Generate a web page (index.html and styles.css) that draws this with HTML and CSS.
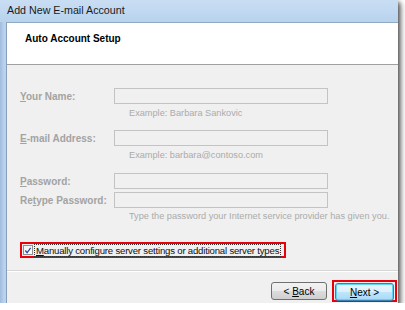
FILE: index.html
```html
<!DOCTYPE html>
<html lang="en">
<head>
  <meta charset="UTF-8" />
  <title>Add New E-mail Account</title>
  <link rel="stylesheet" href="styles.css">
</head>
<body>
  <div class="window">
    <div class="titlebar">Add New E-mail Account</div>
    <div class="client">
      <header class="wizard-head">
        <h1>Auto Account Setup</h1>
      </header>

      <!-- Account fields (disabled) -->
      <section class="fields">
        <div class="row row-name">
          <label><u>Y</u>our Name:</label>
          <div class="box"></div>
        </div>
        <div class="example">Example: Barbara Sankovic</div>

        <div class="row row-mail">
          <label><u>E</u>-mail Address:</label>
          <div class="box"></div>
        </div>
        <div class="example">Example: barbara@contoso.com</div>

        <div class="row row-pass">
          <label><u>P</u>assword:</label>
          <div class="box"></div>
        </div>
        <div class="row row-retype">
          <label>Re<u>t</u>ype Password:</label>
          <div class="box"></div>
        </div>
        <div class="example hint">Type the password your Internet service provider has given you.</div>
      </section>

      <div class="manual">
        <span class="check">
          <svg width="9" height="9" viewBox="0 0 9 9"><path d="M1.5 4.5 L3.5 7 L7.5 1.5" fill="none" stroke="#2b4a9a" stroke-width="1.4"/></svg>
        </span>
        <span class="manual-text"><u>M</u>anually configure server settings or additional server types</span>
      </div>

      <footer class="buttons">
        <button class="btn"><span>&lt; <u>B</u>ack</span></button>
        <div class="next-mark">
          <button class="btn btn-default"><span><u>N</u>ext &gt;</span></button>
        </div>
      </footer>
    </div>
  </div>
</body>
</html>
```

FILE: styles.css
```css
* { box-sizing: border-box; }
body {
  margin: 0;
  background: #fff;
  font-family: 'Liberation Sans', Arial, sans-serif;
  font-size: 10px;
  color: #000;
}
.window {
  width: 398px;
  height: 303px;
  display: flex;
  flex-direction: column;
  background: linear-gradient(to right, #9fbcdc, #b9d3ee 4px, #c3dbf3);
  box-shadow: 2px 2px 4px rgba(0,0,0,0.55), 4px 4px 6px rgba(0,0,0,0.25);
}
.titlebar {
  height: 22px;
  padding-left: 7px;
  line-height: 20px;
  font-size: 10.7px;
  color: #1a1a1a;
  background: linear-gradient(to bottom, #c9def3, #b8d3ee);
}
.client {
  flex: 1;
  margin-left: 6px;
  background: #f0f0f0;
  border-left: 1px solid #8aa0b8;
  border-top: 1px solid #92a9c3;
  display: flex;
  flex-direction: column;
}
.wizard-head {
  height: 42px;
  background: #fff;
  border-bottom: 1px solid #a0a0a0;
  padding: 10px 0 0 18px;
}
.wizard-head h1 {
  margin: 0;
  font-size: 10px;
  font-weight: 700;
}
.fields {
  padding: 23px 0 0 13px;
  color: #a3a3a3;
}
.row {
  display: flex;
  align-items: center;
  height: 16px;
}
.row label {
  width: 94px;
  font-weight: 700;
  font-size: 10px;
  white-space: nowrap;
}
.row-mail { margin-top: 9px; }
.row-pass { margin-top: 10px; }
.row-retype { margin-top: 3px; }
.box {
  width: 214px;
  height: 16px;
  border: 1px solid #c3c3c3;
  background: #f0f0f0;
}
.example {
  padding-left: 109px;
  margin-top: 1px;
  height: 16px;
  line-height: 16px;
  font-size: 9.2px;
  color: #ababab;
  white-space: nowrap;
}
.hint { margin-top: 0; }
.manual {
  margin: 18px 0 0 13px;
  width: 266px;
  height: 16px;
  border: 2px solid #e8000b;
  display: flex;
  align-items: center;
  padding-left: 1px;
  gap: 2px;
}
.check {
  flex: none;
  width: 10px;
  height: 10px;
  border: 1px solid #8e8f8f;
  background: linear-gradient(to bottom right, #f0f0f0, #fff);
  display: flex;
  align-items: center;
  justify-content: center;
}
.manual-text {
  font-size: 9.6px;
  letter-spacing: -0.2px;
  line-height: 11px;
  white-space: nowrap;
  outline: 1px dotted #333;
  padding: 0 1px;
  color: #111;
}
.buttons {
  margin-top: 12px;
  border-top: 1px solid #d6d6d6;
  box-shadow: inset 0 1px 0 #fff;
  flex: 1;
  display: flex;
  justify-content: flex-end;
  align-items: flex-start;
  padding: 9px 1px 0 0;
  gap: 5px;
}
.btn {
  width: 56px;
  height: 18px;
  margin-top: 2px;
  border: 1px solid #707070;
  border-radius: 3px;
  background: linear-gradient(to bottom, #f2f2f2 0%, #ebebeb 50%, #dddddd 51%, #cfcfcf 100%);
  font-family: inherit;
  font-size: 10px;
  color: #000;
  padding: 0;
}
.next-mark {
  width: 65px;
  height: 22px;
  border: 2px solid #e8000b;
  display: flex;
  justify-content: center;
}
.btn-default {
  width: 59px;
  margin-top: 1px;
  border-color: #3c7fb1;
  box-shadow: inset 0 0 0 1px #5fd3f8;
  background: linear-gradient(to bottom, #eaf6fd 0%, #d9f0fc 50%, #bee6fd 51%, #a7d9f5 100%);
}
```
